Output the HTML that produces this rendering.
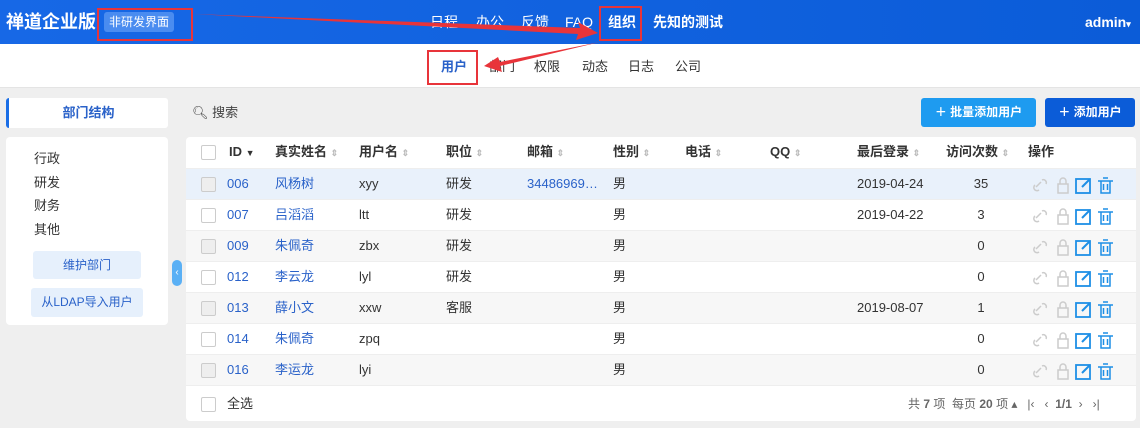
<!DOCTYPE html>
<html><head><meta charset="utf-8"><style>
*{box-sizing:border-box;margin:0;padding:0}
body{width:1140px;height:428px;overflow:hidden;background:#efefef;font-family:"Liberation Sans","Noto Sans CJK SC",sans-serif;font-size:13px;line-height:16px;color:#333;position:relative}
.top{position:absolute;left:0;top:0;width:1140px;height:44px;background:linear-gradient(90deg,#1768e6,#0b5cd8)}
.logo{position:absolute;left:6px;top:11px;color:#fff;font-size:18px;line-height:22px;font-weight:bold}
.tag{position:absolute;left:104px;top:12px;background:#4a8cf0;color:#fff;font-size:12px;line-height:16px;padding:2px 5px;border-radius:3px}
.nav{position:absolute;top:13px;color:#fff;font-size:14px;line-height:18px;font-weight:bold}
.sub{position:absolute;left:0;top:44px;width:1140px;height:44px;background:#fff;border-bottom:1px solid #e4e4e4}
.sub span{position:absolute;top:15px;font-size:13px;color:#333}
.a{position:absolute}
.red{position:absolute;border:2px solid #e8343a}
.side{position:absolute;left:6px;top:137px;width:162px;height:188px;background:#fff;border-radius:4px}
.btn{position:absolute;background:#e6f0fc;color:#2a62c9;font-size:12px;text-align:center;border-radius:3px}
.tbl{position:absolute;left:186px;top:137px;width:950px;height:284px;background:#fff;border-radius:4px;overflow:hidden}
.row{position:absolute;left:0;width:950px;height:31px;border-top:1px solid #eee}
.row span,.hd span{position:absolute;top:7px;white-space:nowrap;line-height:16px}
.hd span{font-weight:bold;color:#333}
.cb{position:absolute;left:15px;top:8px;width:15px;height:15px;border:1px solid #ccc;border-radius:2px;background:#fff}
.lk{color:#2a62c9}
.s{color:#bbb;font-size:9px}
.ops{position:absolute;left:846px;top:6px}
</style></head><body>
<div class="top">
<div class="logo">禅道企业版</div><div class="tag">非研发界面</div>
<span class="nav" style="left:430px;font-weight:normal">日程</span>
<span class="nav" style="left:476px;font-weight:normal">办公</span>
<span class="nav" style="left:521px;font-weight:normal">反馈</span>
<span class="nav" style="left:565px;font-weight:normal">FAQ</span>
<span class="nav" style="left:608px">组织</span>
<span class="nav" style="left:653px">先知的测试</span>
<span class="nav" style="left:1085px">admin<span style="font-size:9px">▾</span></span>
</div>
<div class="sub">
<span style="left:441px;color:#2a62c9;font-weight:bold">用户</span>
<span style="left:489px">部门</span><span style="left:534px">权限</span><span style="left:582px">动态</span><span style="left:628px">日志</span><span style="left:675px">公司</span>
</div>
<div class="a" style="left:6px;top:98px;width:162px;height:30px;background:#fff;border-left:3px solid #1a6ee6;border-radius:3px;color:#2a62c9;font-weight:bold;text-align:center;line-height:30px">部门结构</div>
<div class="a" style="left:192px;top:105px;color:#444">🔍︎ 搜索</div>
<div class="a" style="left:921px;top:98px;width:115px;height:29px;background:#1e9bf0;color:#fff;border-radius:3px;font-weight:bold;line-height:29px;text-align:center;font-size:12px">＋ 批量添加用户</div>
<div class="a" style="left:1045px;top:98px;width:90px;height:29px;background:#0b5cd8;color:#fff;border-radius:3px;font-weight:bold;line-height:29px;text-align:center;font-size:12px">＋ 添加用户</div>
<div class="side">
<div class="a" style="left:28px;top:14px">行政</div><div class="a" style="left:28px;top:38px">研发</div><div class="a" style="left:28px;top:61px">财务</div><div class="a" style="left:28px;top:85px">其他</div>
<div class="btn" style="left:27px;top:114px;width:108px;height:28px;line-height:28px">维护部门</div>
<div class="btn" style="left:25px;top:151px;width:112px;height:29px;line-height:29px">从LDAP导入用户</div>
</div>
<div class="a" style="left:172px;top:260px;width:10px;height:26px;background:#5ab0f5;border-radius:5px;color:#fff;font-size:10px;line-height:26px;text-align:center">‹</div>
<div class="tbl">
<div class="row hd" style="top:0;border:none"><div class="cb"></div>
<span style="left:43px">ID <span style="position:static;font-size:9px">▼</span></span>
<span style="left:89px">真实姓名 <b class="s">⇕</b></span><span style="left:173px">用户名 <b class="s">⇕</b></span><span style="left:260px">职位 <b class="s">⇕</b></span><span style="left:341px">邮箱 <b class="s">⇕</b></span><span style="left:427px">性别 <b class="s">⇕</b></span><span style="left:499px">电话 <b class="s">⇕</b></span><span style="left:584px">QQ <b class="s">⇕</b></span><span style="left:671px">最后登录 <b class="s">⇕</b></span><span style="left:760px">访问次数 <b class="s">⇕</b></span><span style="left:842px">操作</span></div>
<div id="rows"></div>
<div class="row" style="top:248px;height:36px"><div class="cb" style="top:11px"></div><span style="left:41px;top:10px">全选</span>
<span style="left:722px;top:10px;color:#666;font-size:12px">共 <b>7</b> 项 &nbsp;每页 <b>20</b> 项 ▴ &nbsp; |‹ &nbsp; ‹ &nbsp;<b>1/1</b>&nbsp; › &nbsp; ›|</span></div>
</div>
<script>
var d=[["006","风杨树","xyy","研发","34486969…","男","2019-04-24","35"],["007","吕滔滔","ltt","研发","","男","2019-04-22","3"],["009","朱佩奇","zbx","研发","","男","","0"],["012","李云龙","lyl","研发","","男","","0"],["013","薛小文","xxw","客服","","男","2019-08-07","1"],["014","朱佩奇","zpq","","","男","","0"],["016","李运龙","lyi","","","男","","0"]];
var h="";d.forEach(function(r,i){var bg=i==0?"#e9f1fb":(i%2==0?"#f7f7f7":"#fff");
h+='<div class="row" style="top:'+(31+i*31)+'px;background:'+bg+'"><div class="cb" style="background:'+(i%2==0?"#eee":"#fff")+'"></div><span class="lk" style="left:41px">'+r[0]+'</span><span class="lk" style="left:89px">'+r[1]+'</span><span style="left:173px">'+r[2]+'</span><span style="left:260px">'+r[3]+'</span><span class="lk" style="left:341px">'+r[4]+'</span><span style="left:427px">'+r[5]+'</span><span style="left:671px">'+r[6]+'</span><span style="left:780px;width:30px;text-align:center">'+r[7]+'</span><div class="ops"><svg width="90" height="20"><path d="M4 12l5-5M3 10a3 3 0 0 0 4 5M10 5a3 3 0 0 1 4 4" stroke="#ccc" fill="none" stroke-width="1.5"/><rect x="26" y="9" width="10" height="9" fill="none" stroke="#ccc" stroke-width="1.5"/><path d="M28 9V6a3 3 0 0 1 6 0v3" stroke="#ccc" fill="none" stroke-width="1.5"/><rect x="44" y="4" width="14" height="14" fill="none" stroke="#1e8fe6" stroke-width="1.8"/><path d="M50 12l8-8" stroke="#1e8fe6" stroke-width="2"/><path d="M66 6h15M69 6v12h9V6M71 3h5M71.5 9v6M75.5 9v6" stroke="#1e8fe6" fill="none" stroke-width="1.5"/></svg></div></div>';});
document.getElementById("rows").innerHTML=h;
</script>
<div class="red" style="left:97px;top:8px;width:96px;height:33px"></div>
<div class="red" style="left:599px;top:6px;width:43px;height:35px"></div>
<div class="red" style="left:427px;top:50px;width:51px;height:35px"></div>
<svg class="a" style="left:0;top:0" width="1140" height="100"><polygon points="193,14 580,28 578,22 598,33 576,40 578,34" fill="#e8343a"/><polygon points="600,42 500,66 502,72 484,66 498,57 500,62" fill="#e8343a"/></svg>
</body></html>
